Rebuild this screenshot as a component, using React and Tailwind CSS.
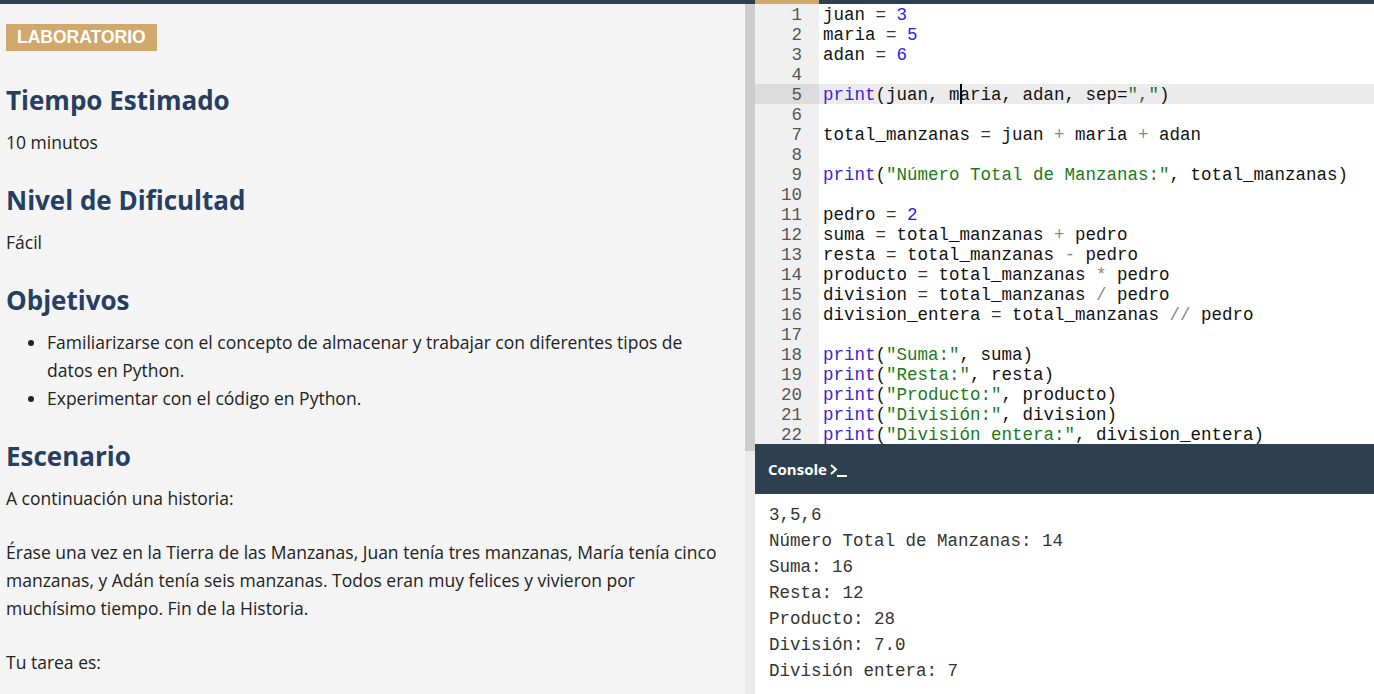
import React from "react";

const C = {
  t: "text-[#111]",
  b: "text-[#4422cc]",
  n: "text-[#2222ee]",
  s: "text-[#1a7a1a]",
  o: "text-[#888]",
  e: "text-[#333]",
};

const lines = [
  [["juan ", "t"], ["=", "e"], [" ", "t"], ["3", "n"]],
  [["maria ", "t"], ["=", "e"], [" ", "t"], ["5", "n"]],
  [["adan ", "t"], ["=", "e"], [" ", "t"], ["6", "n"]],
  [],
  [["print", "b"], ["(juan, maria, adan, sep=", "t"], ["\",\"", "s"], [")", "t"]],
  [],
  [["total_manzanas ", "t"], ["=", "e"], [" juan ", "t"], ["+", "o"], [" maria ", "t"], ["+", "o"], [" adan", "t"]],
  [],
  [["print", "b"], ["(", "t"], ["\"Número Total de Manzanas:\"", "s"], [", total_manzanas)", "t"]],
  [],
  [["pedro ", "t"], ["=", "e"], [" ", "t"], ["2", "n"]],
  [["suma ", "t"], ["=", "e"], [" total_manzanas ", "t"], ["+", "o"], [" pedro", "t"]],
  [["resta ", "t"], ["=", "e"], [" total_manzanas ", "t"], ["-", "o"], [" pedro", "t"]],
  [["producto ", "t"], ["=", "e"], [" total_manzanas ", "t"], ["*", "o"], [" pedro", "t"]],
  [["division ", "t"], ["=", "e"], [" total_manzanas ", "t"], ["/", "o"], [" pedro", "t"]],
  [["division_entera ", "t"], ["=", "e"], [" total_manzanas ", "t"], ["//", "o"], [" pedro", "t"]],
  [],
  [["print", "b"], ["(", "t"], ["\"Suma:\"", "s"], [", suma)", "t"]],
  [["print", "b"], ["(", "t"], ["\"Resta:\"", "s"], [", resta)", "t"]],
  [["print", "b"], ["(", "t"], ["\"Producto:\"", "s"], [", producto)", "t"]],
  [["print", "b"], ["(", "t"], ["\"División:\"", "s"], [", division)", "t"]],
  [["print", "b"], ["(", "t"], ["\"División entera:\"", "s"], [", division_entera)", "t"]],
];

const output = [
  "3,5,6",
  "Número Total de Manzanas: 14",
  "Suma: 16",
  "Resta: 12",
  "Producto: 28",
  "División: 7.0",
  "División entera: 7",
];

const mono = "font-['Liberation_Mono','Courier_New',monospace] text-[17.5px]";

function Heading({ children, first }) {
  return (
    <h2
      className={`${first ? "mt-[31px]" : "mt-[26px]"} mb-[10px] text-[26px] font-bold leading-[36px] text-[#253e61]`}
    >
      {children}
    </h2>
  );
}

function P({ children }) {
  return <p className="mb-[26px] text-[17.5px] leading-[28px] text-[#222]">{children}</p>;
}

export default function App() {
  return (
    <div className="flex h-[694px] w-[1374px] overflow-hidden font-['Open_Sans',sans-serif]">
      {/* Left instructions panel */}
      <div className="flex w-[745px] shrink-0 flex-col bg-[#f4f4f4]">
        <div className="h-[4px] shrink-0 bg-[#2e3f50]" />
        <div className="pl-[6px] pr-[24px] pt-[20px]">
          <div className="inline-flex h-[27px] items-center bg-[#d1a86b] px-[11px] font-['Liberation_Sans',Arial,sans-serif] text-[17.5px] font-bold text-white">
            LABORATORIO
          </div>
          <Heading first>Tiempo Estimado</Heading>
          <P>10 minutos</P>
          <Heading>Nivel de Dificultad</Heading>
          <P>Fácil</P>
          <Heading>Objetivos</Heading>
          <ul className="list-disc pl-[41px] text-[17.5px] leading-[28px] text-[#222]">
            <li>
              Familiarizarse con el concepto de almacenar y trabajar con diferentes tipos de datos en
              Python.
            </li>
            <li>Experimentar con el código en Python.</li>
          </ul>
          <Heading>Escenario</Heading>
          <P>A continuación una historia:</P>
          <P>
            Érase una vez en la Tierra de las Manzanas, Juan tenía tres manzanas, María tenía cinco
            manzanas, y Adán tenía seis manzanas. Todos eran muy felices y vivieron por muchísimo
            tiempo. Fin de la Historia.
          </P>
          <P>Tu tarea es:</P>
        </div>
      </div>

      {/* Scrollbar */}
      <div className="flex w-[10px] shrink-0 flex-col">
        <div className="h-[4px] shrink-0 bg-[#2e3f50]" />
        <div className="h-[447px] shrink-0 bg-[#cdcdcd]" />
        <div className="flex-1 bg-[#ebebeb]" />
      </div>

      {/* Right side: editor + console */}
      <div className="flex min-w-0 flex-1 flex-col">
        <div className="flex h-[444px] shrink-0">
          {/* gutter */}
          <div className="flex w-[64px] shrink-0 flex-col bg-[#f0f0f0]">
            <div className="h-[4px] shrink-0 bg-[#d1a86b]" />
            {lines.map((_, i) => (
              <div
                key={i}
                className={`${mono} h-[20px] pr-[17px] text-right leading-[22px] text-[#555] ${i === 4 ? "bg-[#dcdcdc]" : ""}`}
              >
                {i + 1}
              </div>
            ))}
          </div>
          {/* code */}
          <div className="flex min-w-0 flex-1 flex-col bg-white">
            <div className="h-[4px] shrink-0 bg-[#2e3f50]" />
            {lines.map((toks, i) => (
              <div
                key={i}
                className={`${mono} relative h-[20px] whitespace-pre pl-[4px] leading-[22px] ${i === 4 ? "bg-[#ebebeb]" : ""}`}
              >
                {toks.map(([txt, c], j) => (
                  <span key={j} className={C[c]}>
                    {txt}
                  </span>
                ))}
                {i === 4 && (
                  <span className="absolute left-[141px] top-0 h-[20px] w-[2px] bg-black" />
                )}
              </div>
            ))}
          </div>
        </div>

        {/* Console header */}
        <div className="flex h-[50px] shrink-0 items-center gap-[2px] bg-[#2e3f50] pl-[13px]">
          <span className="text-[15px] font-bold text-white">Console</span>
          <svg width="20" height="18" viewBox="0 0 20 18" fill="none" className="mt-[1px]">
            <polyline points="2,4 7,8.5 2,13" stroke="white" strokeWidth="2" fill="none" />
            <line x1="8" y1="15" x2="18" y2="15" stroke="white" strokeWidth="2" />
          </svg>
        </div>

        {/* Console body */}
        <div className="flex-1 bg-white pl-[14px] pt-[8px]">
          {output.map((l, i) => (
            <div key={i} className={`${mono} whitespace-pre leading-[26px] text-[#333]`}>
              {l}
            </div>
          ))}
        </div>
      </div>
    </div>
  );
}
